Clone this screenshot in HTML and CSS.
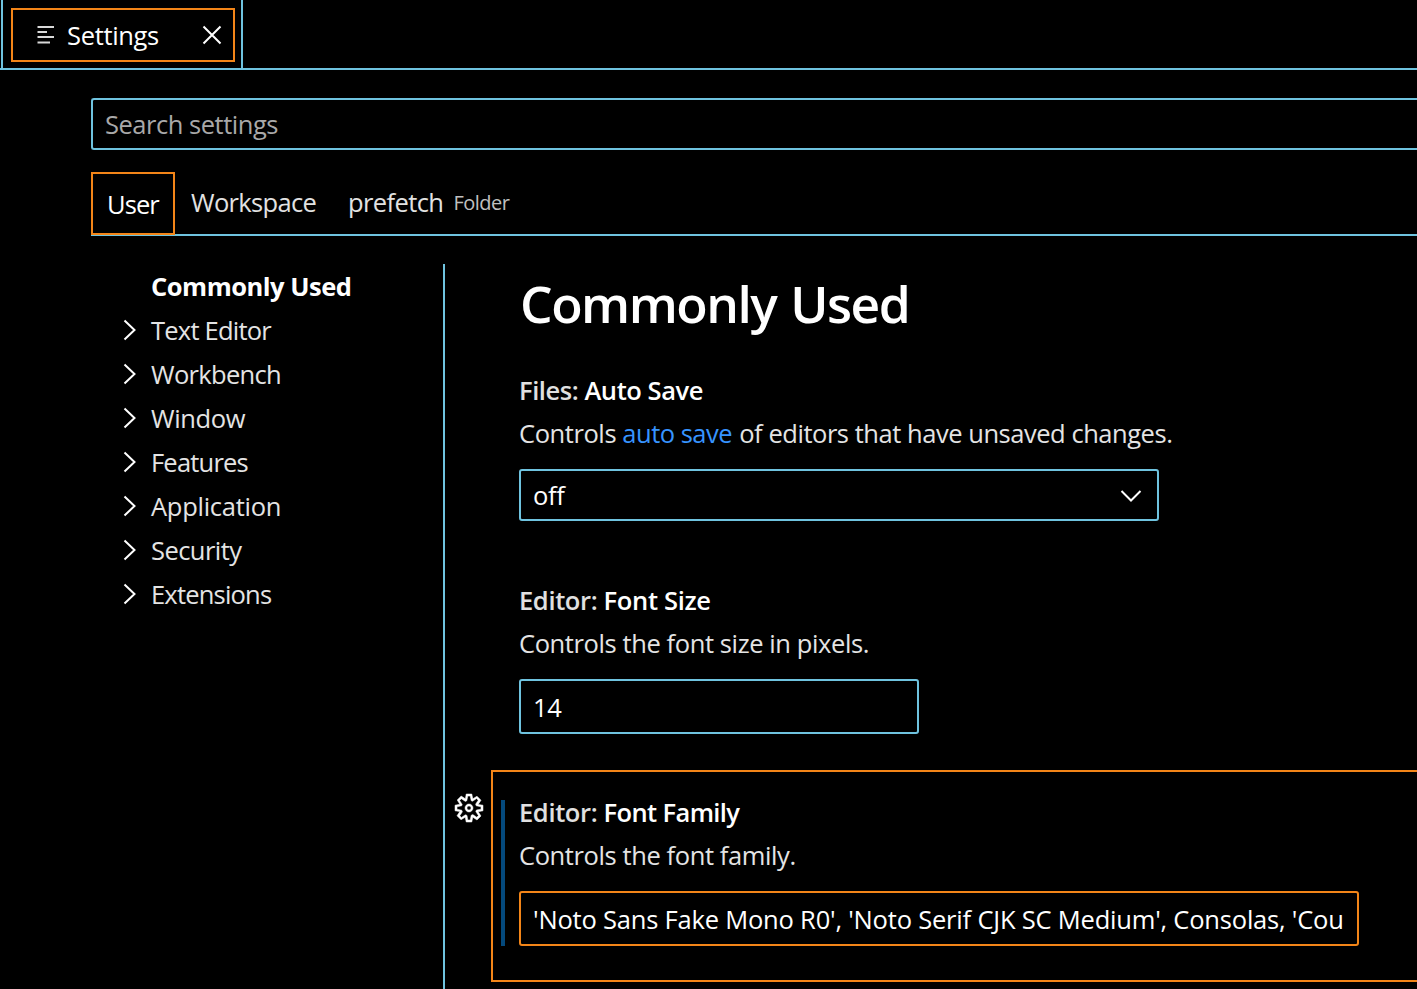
FILE: index.html
```html
<!DOCTYPE html>
<html lang="en">
<head>
<meta charset="utf-8">
<title>Settings</title>
<link rel="stylesheet" href="styles.css">
</head>
<body>
<header class="tabs">
  <div class="tab">
    <svg class="tab-icon" width="18" height="20" viewBox="0 0 18 20"><path d="M0.5 2H17M0.5 7H10M0.5 12H17M0.5 17.5H13"/></svg>
    <span class="tab-label">Settings</span>
    <svg class="tab-close" width="20" height="20" viewBox="0 0 20 20"><path d="M1.5 1.5L18.5 18.5M18.5 1.5L1.5 18.5"/></svg>
  </div>
</header>
<main class="settings">
  <div class="search"><span class="search-hint">Search settings</span></div>
  <nav class="scopes">
    <div class="scope scope-active"><span class="t-user">User</span></div>
    <div class="scope scope-workspace"><span class="t-workspace">Workspace</span></div>
    <div class="scope scope-folder"><span class="t-prefetch">prefetch</span><span class="scope-kind">Folder</span></div>
  </nav>
  <div class="body">
    <ul class="toc">
      <li class="toc-row toc-current"><span class="t-common">Commonly Used</span></li>
      <li class="toc-row"><svg class="chevron" width="14" height="22" viewBox="0 0 14 22"><path d="M1.5 1.5L11.5 11L1.5 20.5"/></svg><span class="t-text">Text Editor</span></li>
      <li class="toc-row"><svg class="chevron" width="14" height="22" viewBox="0 0 14 22"><path d="M1.5 1.5L11.5 11L1.5 20.5"/></svg><span class="t-workbench">Workbench</span></li>
      <li class="toc-row"><svg class="chevron" width="14" height="22" viewBox="0 0 14 22"><path d="M1.5 1.5L11.5 11L1.5 20.5"/></svg><span class="t-window">Window</span></li>
      <li class="toc-row"><svg class="chevron" width="14" height="22" viewBox="0 0 14 22"><path d="M1.5 1.5L11.5 11L1.5 20.5"/></svg><span class="t-features">Features</span></li>
      <li class="toc-row"><svg class="chevron" width="14" height="22" viewBox="0 0 14 22"><path d="M1.5 1.5L11.5 11L1.5 20.5"/></svg><span class="t-application">Application</span></li>
      <li class="toc-row"><svg class="chevron" width="14" height="22" viewBox="0 0 14 22"><path d="M1.5 1.5L11.5 11L1.5 20.5"/></svg><span class="t-security">Security</span></li>
      <li class="toc-row"><svg class="chevron" width="14" height="22" viewBox="0 0 14 22"><path d="M1.5 1.5L11.5 11L1.5 20.5"/></svg><span class="t-extensions">Extensions</span></li>
    </ul>
    <section class="content">
      <h1 class="heading">Commonly Used</h1>
      <article class="item item-select">
        <h2 class="item-title"><span class="category t-files">Files: </span><span class="t-autosave">Auto Save</span></h2>
        <p class="item-desc"><span class="t-controls">Controls </span><a class="link">auto save</a><span class="t-rest"> of editors that have unsaved changes.</span></p>
        <div class="control select"><span class="t-off">off</span><svg class="arrow" width="22" height="14" viewBox="0 0 22 14"><path d="M1.5 2L11 11.5L20.5 2"/></svg></div>
      </article>
      <article class="item">
        <h2 class="item-title"><span class="category t-editor">Editor: </span><span class="t-fontsize">Font Size</span></h2>
        <p class="item-desc">Controls the font size in pixels.</p>
        <div class="control number"><span>14</span></div>
      </article>
      <article class="item item-focused">
        <svg class="gear" width="32" height="32" viewBox="0 0 16 16"><path fill-rule="evenodd" d="M9.1 4.4L8.6 2H7.4l-.5 2.4-.7.3-2-1.3-.9.8 1.3 2-.2.7-2.4.5v1.2l2.4.5.3.8-1.3 2 .8.8 2-1.3.8.3.4 2.3h1.2l.5-2.4.8-.3 2 1.3.8-.8-1.3-2 .3-.8 2.3-.4V7.4l-2.4-.5-.3-.8 1.3-2-.8-.8-2 1.3-.7-.2zM9.4 1l.5 2.4L12 2.1l2 2-1.4 2.1 2.4.4v2.8l-2.4.5L14 12l-2 2-2.1-1.4-.5 2.4H6.6l-.5-2.4L4 13.9l-2-2 1.4-2.1L1 9.4V6.6l2.4-.5L2.1 4l2-2 2.1 1.4.4-2.4h2.8zm.6 7c0 1.1-.9 2-2 2s-2-.9-2-2 .9-2 2-2 2 .9 2 2zM8 9c.6 0 1-.4 1-1s-.4-1-1-1-1 .4-1 1 .4 1 1 1z"/></svg>
        <div class="modified"></div>
        <h2 class="item-title"><span class="category t-editor">Editor: </span><span class="t-fontfamily">Font Family</span></h2>
        <p class="item-desc">Controls the font family.</p>
        <div class="control family"><span class="t-family">'Noto Sans Fake Mono R0', 'Noto Serif CJK SC Medium', Consolas, 'Cou</span></div>
      </article>
    </section>
  </div>
</main>
</body>
</html>
```
FILE: styles.css
```css
*, *::before { box-sizing: border-box; }
html, body { height: 100%; }
body {
  margin: 0;
  display: flex;
  flex-direction: column;
  overflow: hidden;
  background: #000;
  color: #fff;
  font: 25.5px/24px "Open Sans", "Noto Sans", sans-serif;
}
h1, h2, p, ul { margin: 0; padding: 0; list-style: none; }
svg { display: block; flex: none; fill: none; stroke: #fff; stroke-width: 2; }

.tabs { flex: none; height: 70px; padding-left: 1px; border-bottom: 2px solid #6fc3df; display: flex; }
.tab {
  position: relative;
  width: 242px;
  border: solid #6fc3df;
  border-width: 0 2px;
  display: flex;
  align-items: center;
  padding: 2px 0 0 34px;
}
.tab::before { content: ""; position: absolute; left: 8px; top: 8px; width: 224px; height: 54px; border: 2px solid #f38518; }
.tab-icon { stroke: #d8d8d8; }
.tab-label { width: 135px; margin-left: 12px; letter-spacing: -.33px; }

.settings { flex: 1; min-height: 0; display: flex; flex-direction: column; padding: 28px 0 0 91px; }
.search {
  flex: none;
  height: 52px;
  border: 2px solid #6fc3df;
  border-right: 0;
  border-radius: 3px 0 0 3px;
  padding: 12px 0 0 12px;
}
.search-hint { color: #a9a9a9; letter-spacing: -.47px; }

.scopes { flex: none; height: 64px; margin-top: 22px; border-bottom: 2px solid #6fc3df; display: flex; }
.scope { color: #e2e2e2; padding-top: 18px; height: 63px; display: flex; }
.scope-active { width: 84px; border: 2px solid #f38518; padding: 18px 0 0 14px; color: #fff; letter-spacing: -.9px; }
.scope-workspace { width: 158px; padding-left: 16px; letter-spacing: -.67px; }
.scope-folder { padding-left: 15px; letter-spacing: -.6px; }
.scope-kind { font-size: 20px; margin-left: 10px; color: #c0c0c0; line-height: 25px; letter-spacing: -.5px; }

.body { flex: 1; min-height: 0; display: flex; margin-top: 28px; }
.toc { width: 354px; border-right: 2px solid #6fc3df; flex: none; }
.toc-row { height: 44px; display: flex; align-items: center; padding-left: 32px; color: #e4e4e4; }
.toc-row span { margin-left: 14px; }
.toc-current { padding-left: 46px; font-weight: 700; color: #fff; }
.t-common { letter-spacing: -.48px; }
.t-text { letter-spacing: -.77px; }
.t-workbench { letter-spacing: -.67px; }
.t-window { letter-spacing: -.35px; }
.t-features { letter-spacing: -.8px; }
.t-application { letter-spacing: -.27px; }
.t-security { letter-spacing: -.55px; }
.t-extensions { letter-spacing: -.8px; }

.content { flex: 1; min-width: 0; padding-left: 46px; }
.heading { height: 84px; padding-left: 29px; font-size: 51.5px; font-weight: 600; line-height: 78px; letter-spacing: -1.5px; word-spacing: 2px; }
.item { position: relative; height: 212px; padding: 28px 0 0 26px; border: 2px solid transparent; border-right: 0; }
.item-select { height: 210px; }
.item-focused { border-color: #f38518; }
.item-title { font-size: inherit; font-weight: 600; height: 24px; }
.category { color: #e0e0e0; }
.t-files, .t-autosave { letter-spacing: -.44px; }
.t-editor { letter-spacing: -.36px; }
.t-fontsize { letter-spacing: -.33px; }
.t-fontfamily { letter-spacing: -.63px; }
.item-desc { height: 24px; margin-top: 19px; color: #e4e4e4; letter-spacing: -.4px; }
.t-controls { letter-spacing: -.42px; }
.link { color: #3794ff; letter-spacing: -.5px; }
.t-rest { margin-left: 1px; letter-spacing: -.46px; }
.control { margin-top: 24px; height: 55px; border: 2px solid #6fc3df; border-radius: 3px; padding: 14px 12px 0; }
.select { width: 640px; height: 52px; padding: 12px 15px 0 12px; display: flex; justify-content: space-between; }
.t-off { letter-spacing: -.3px; }
.arrow { margin-top: 6px; }
.number { width: 400px; letter-spacing: -.4px; }
.family { width: 840px; border-color: #f38518; overflow: hidden; white-space: nowrap; }
.t-family { letter-spacing: -.2px; }
.gear { position: absolute; left: -40px; top: 20px; fill: #fff; stroke-width: .25; }
.modified { position: absolute; left: 8px; top: 28px; width: 4px; height: 146px; background: #04497c; }
```
